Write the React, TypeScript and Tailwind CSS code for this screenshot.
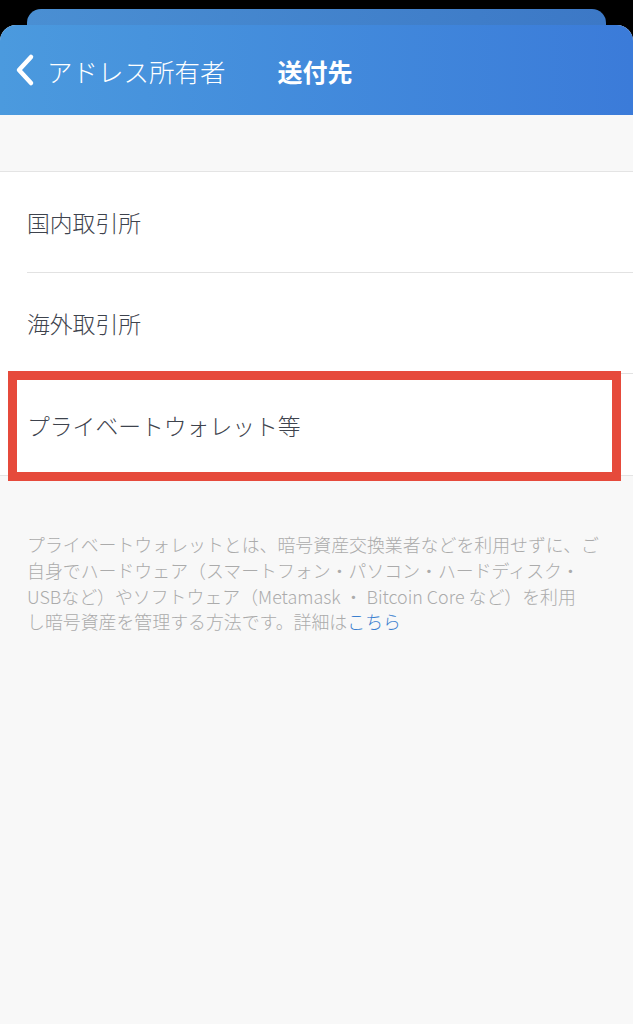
import React from 'react';

const rows = ['国内取引所', '海外取引所', 'プライベートウォレット等'];

export default function App() {
  return (
    <div
      className="relative w-[633px] h-[1024px] overflow-hidden bg-black"
      style={{ fontFamily: '"Noto Sans CJK JP", "Noto Sans", sans-serif' }}
    >
      {/* stacked sheet behind */}
      <div className="mx-[27px] mt-[9px] h-[40px] rounded-t-[14px] bg-gradient-to-r from-[#4a8fd3] to-[#3c78c6]" />

      {/* front sheet */}
      <div className="absolute left-0 right-0 top-[25px] bottom-0 rounded-t-[16px] overflow-hidden bg-[#f8f8f8] flex flex-col">
        {/* Header */}
        <div className="h-[90px] shrink-0 flex items-center bg-gradient-to-r from-[#4b9ade] to-[#3b7bd9] text-white">
          <svg width="24" height="34" viewBox="0 0 24 34" className="ml-[12px]">
            <path d="M19 4 L7 17 L19 30" fill="none" stroke="white" strokeWidth="4.5" strokeLinecap="round" strokeLinejoin="round" />
          </svg>
          <span className="ml-[11px] text-[25.5px] font-light leading-none pt-[2px]">アドレス所有者</span>
          <span className="ml-[52px] text-[25px] font-bold leading-none pt-[2px]">送付先</span>
        </div>

        {/* gray spacer */}
        <div className="h-[57px] shrink-0 border-b border-[#e4e4e4]" />

        {/* list */}
        <div className="relative bg-white border-b border-[#e4e4e4]">
          {rows.map((r, i) => (
            <div key={r} className="pl-[27px]">
              <div
                className={`h-[101px] flex items-center pt-[3px] text-[22.8px] font-light text-[#3e434d] ${
                  i < rows.length - 1 ? 'border-b border-[#e2e2e2]' : ''
                }`}
              >
                {r}
              </div>
            </div>
          ))}
          {/* highlight box */}
          <div className="absolute left-[8px] w-[613px] top-[199px] h-[110px] border-[9px] border-[#e64a3b]" />
        </div>

        {/* description */}
        <div className="px-[27px] pt-[56px] text-[17.9px] leading-[25.8px] font-light text-[#ababab] whitespace-pre">
          <p>プライベートウォレットとは、暗号資産交換業者などを利用せずに、ご</p>
          <p>自身でハードウェア（スマートフォン・パソコン・ハードディスク・</p>
          <p>USBなど）やソフトウェア（Metamask ・ Bitcoin Core など）を利用</p>
          <p>
            し暗号資産を管理する方法です。詳細は<span className="text-[#3a7fcf]">こちら</span>
          </p>
        </div>
      </div>
    </div>
  );
}
